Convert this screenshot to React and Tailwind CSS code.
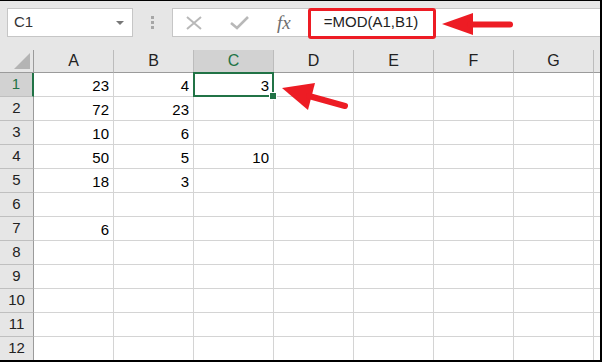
import React from 'react';

const cols = ['A', 'B', 'C', 'D', 'E', 'F', 'G'];

// values by row, column A..C
const data = [
  ['23', '4', '3'],
  ['72', '23', ''],
  ['10', '6', ''],
  ['50', '5', '10'],
  ['18', '3', ''],
  ['', '', ''],
  ['6', '', ''],
  ['', '', ''],
  ['', '', ''],
  ['', '', ''],
  ['', '', ''],
  ['', '', ''],
];

function Toolbar() {
  return (
    <div className="flex items-start h-[49px] bg-[#e6e6e6] pt-[7px] pl-[7px]">
      <div className="relative flex items-center w-[126px] h-[29px] bg-white border border-[#c6c6c6] pl-[6px] text-[15px] text-[#333]">
        C1
        <span className="absolute right-[8px] top-[12px] w-0 h-0 border-l-[4px] border-r-[4px] border-t-[4px] border-l-transparent border-r-transparent border-t-[#777]" />
      </div>
      <div className="w-[39px] h-[29px] flex flex-col items-center justify-center gap-[2px] pr-[1px]">
        <span className="w-[3px] h-[3px] bg-[#a6a6a6]" />
        <span className="w-[3px] h-[3px] bg-[#a6a6a6]" />
        <span className="w-[3px] h-[3px] bg-[#a6a6a6]" />
      </div>
      <div className="flex-1 flex items-center h-[29px] bg-white border border-[#c6c6c6] border-r-0">
        <svg width="18" height="14" viewBox="0 0 18 14" className="ml-[12px]">
          <path d="M2 1 L16 13 M16 1 L2 13" stroke="#b8b8b8" strokeWidth="2" fill="none" />
        </svg>
        <svg width="19" height="14" viewBox="0 0 19 14" className="ml-[27px]">
          <path d="M1 7 L7 12 L18 1" stroke="#b8b8b8" strokeWidth="2.6" fill="none" />
        </svg>
        <span className="ml-[28px] font-['Liberation_Serif',serif] italic text-[19px] text-[#6e6e6e] leading-none">fx</span>
        <span className="ml-[33px] text-[15px] text-[#222]">=MOD(A1,B1)</span>
      </div>
    </div>
  );
}

function Grid() {
  return (
    <div className="grid grid-cols-[34px_repeat(7,80px)_1fr]">
      <div className="relative h-[23px] bg-[#e6e6e6] border-r border-b border-[#9b9b9b]">
        <svg width="17" height="16" viewBox="0 0 17 16" className="absolute right-[2px] bottom-[3px]">
          <polygon points="0,16 16,0 16,16" fill="#b4b4b4" />
        </svg>
      </div>
      {cols.map((c) => (
        <div
          key={c}
          className={
            c === 'C'
              ? 'h-[23px] flex items-center justify-center bg-[#d2d2d2] border-r border-[#bcbcbc] border-b border-b-[#9b9b9b] text-[16px] text-[#217346]'
              : 'h-[23px] flex items-center justify-center bg-[#e6e6e6] border-r border-[#bcbcbc] border-b border-b-[#9b9b9b] text-[16px] text-[#222]'
          }
        >
          {c}
        </div>
      ))}
      <div className="h-[23px] bg-[#e6e6e6] border-b border-[#9b9b9b]" />

      {data.map((row, i) => (
        <React.Fragment key={i}>
          <div
            className={
              i === 0
                ? 'h-[24px] flex items-center justify-center bg-[#d2d2d2] border-b border-[#bfbfbf] border-r-2 border-r-[#217346] text-[15px] text-[#217346]'
                : 'h-[24px] flex items-center justify-center bg-[#e6e6e6] border-b border-[#bfbfbf] border-r border-r-[#9b9b9b] text-[15px] text-[#222]'
            }
          >
            {i + 1}
          </div>
          {cols.map((c, j) => (
            <div
              key={c}
              className="relative h-[24px] flex items-center justify-end pr-[4px] pt-[3px] border-r border-b border-[#d4d4d4] text-[15px] text-black"
            >
              {row[j] || ''}
              {i === 0 && c === 'C' && (
                <>
                  <span className="absolute z-10 left-[-1px] top-[-1px] right-[-1px] bottom-[-1px] border-2 border-[#217346]" />
                  <span className="absolute z-10 right-[-4px] bottom-[-4px] w-[8px] h-[8px] bg-[#217346] border border-white" />
                </>
              )}
            </div>
          ))}
          <div className="h-[24px] border-b border-[#d4d4d4]" />
        </React.Fragment>
      ))}
    </div>
  );
}

export default function App() {
  return (
    <div className="relative w-[602px] h-[362px] overflow-hidden bg-white border-t border-r-2 border-b-2 border-black font-['Liberation_Sans',sans-serif]">
      <Toolbar />
      <Grid />

      {/* annotations */}
      <div className="absolute left-[308px] top-[7px] w-[128px] h-[31px] border-[3px] border-[#ed1c24] rounded-[3px]" />
      <svg width="602" height="362" className="absolute z-20 left-0 top-[-1px] pointer-events-none">
        <polygon points="442,24 473,13 473,35" fill="#ed1c24" />
        <line x1="470" y1="24.5" x2="510" y2="24.5" stroke="#ed1c24" strokeWidth="6" strokeLinecap="round" />
        <polygon points="282,88 315,83 308,110" fill="#ed1c24" />
        <line x1="309" y1="96" x2="345" y2="106" stroke="#ed1c24" strokeWidth="6" strokeLinecap="round" />
      </svg>
    </div>
  );
}
